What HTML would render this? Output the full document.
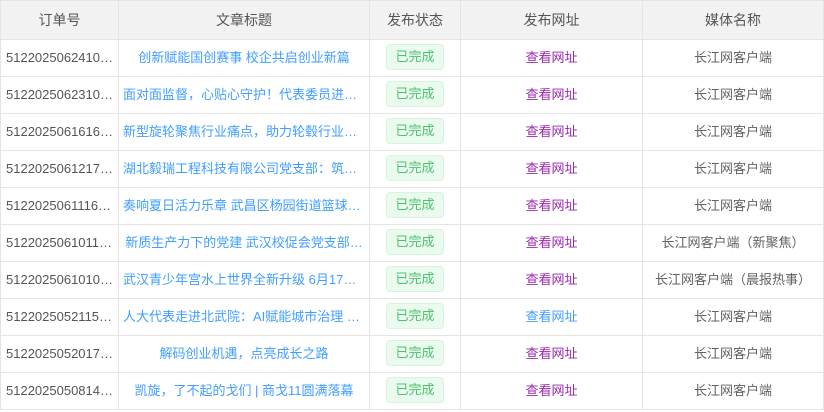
<!DOCTYPE html>
<html><head><meta charset="utf-8"><style>
body{margin:0;background:#fff;font-family:"Liberation Sans","Noto Sans CJK SC",sans-serif;font-size:13px;color:#606266}
table{border-collapse:collapse;table-layout:fixed;width:823px;position:absolute;left:0;top:0}
td,th{border:1px solid #e4e4e4;height:36px;padding:0;text-align:center;white-space:nowrap;overflow:hidden;text-overflow:ellipsis;line-height:16px;vertical-align:middle}
th{height:38px;background:#f2f2f2;font-weight:normal;font-size:14px;color:#555}
td.id{text-align:left;padding-left:5px;color:#555;font-size:13px}
td.t{color:#409eff;padding:0 4px}
.b{display:inline-block;vertical-align:middle;width:56px;height:24px;line-height:24px;border:1px solid #d5f5dd;background:#eafaee;color:#4cc46e;border-radius:4px;font-size:13px;margin-top:-2px}
.v{color:#9c27b0}.l{color:#409eff}
</style></head><body>
<table>
<colgroup><col style="width:118px"><col style="width:251px"><col style="width:91px"><col style="width:182px"><col style="width:181px"></colgroup>
<tr><th>订单号</th><th>文章标题</th><th>发布状态</th><th>发布网址</th><th>媒体名称</th></tr>
<tr><td class="id">5122025062410…</td><td class="t">创新赋能国创赛事 校企共启创业新篇</td><td><span class="b">已完成</span></td><td class="v">查看网址</td><td>长江网客户端</td></tr>
<tr><td class="id">5122025062310…</td><td class="t">面对面监督，心贴心守护！代表委员进校园开展食品安全</td><td><span class="b">已完成</span></td><td class="v">查看网址</td><td>长江网客户端</td></tr>
<tr><td class="id">5122025061616…</td><td class="t">新型旋轮聚焦行业痛点，助力轮毂行业转型升级</td><td><span class="b">已完成</span></td><td class="v">查看网址</td><td>长江网客户端</td></tr>
<tr><td class="id">5122025061217…</td><td class="t">湖北毅瑞工程科技有限公司党支部：筑牢安全</td><td><span class="b">已完成</span></td><td class="v">查看网址</td><td>长江网客户端</td></tr>
<tr><td class="id">5122025061116…</td><td class="t">奏响夏日活力乐章 武昌区杨园街道篮球联赛</td><td><span class="b">已完成</span></td><td class="v">查看网址</td><td>长江网客户端</td></tr>
<tr><td class="id">5122025061011…</td><td class="t">新质生产力下的党建 武汉校促会党支部…</td><td><span class="b">已完成</span></td><td class="v">查看网址</td><td>长江网客户端（新聚焦）</td></tr>
<tr><td class="id">5122025061010…</td><td class="t">武汉青少年宫水上世界全新升级 6月17日开放</td><td><span class="b">已完成</span></td><td class="v">查看网址</td><td>长江网客户端（晨报热事）</td></tr>
<tr><td class="id">5122025052115…</td><td class="t">人大代表走进北武院：AI赋能城市治理 共话发展</td><td><span class="b">已完成</span></td><td class="l">查看网址</td><td>长江网客户端</td></tr>
<tr><td class="id">5122025052017…</td><td class="t">解码创业机遇，点亮成长之路</td><td><span class="b">已完成</span></td><td class="v">查看网址</td><td>长江网客户端</td></tr>
<tr><td class="id">5122025050814…</td><td class="t">凯旋，了不起的戈们 | 商戈11圆满落幕</td><td><span class="b">已完成</span></td><td class="v">查看网址</td><td>长江网客户端</td></tr>
</table>
</body></html>
